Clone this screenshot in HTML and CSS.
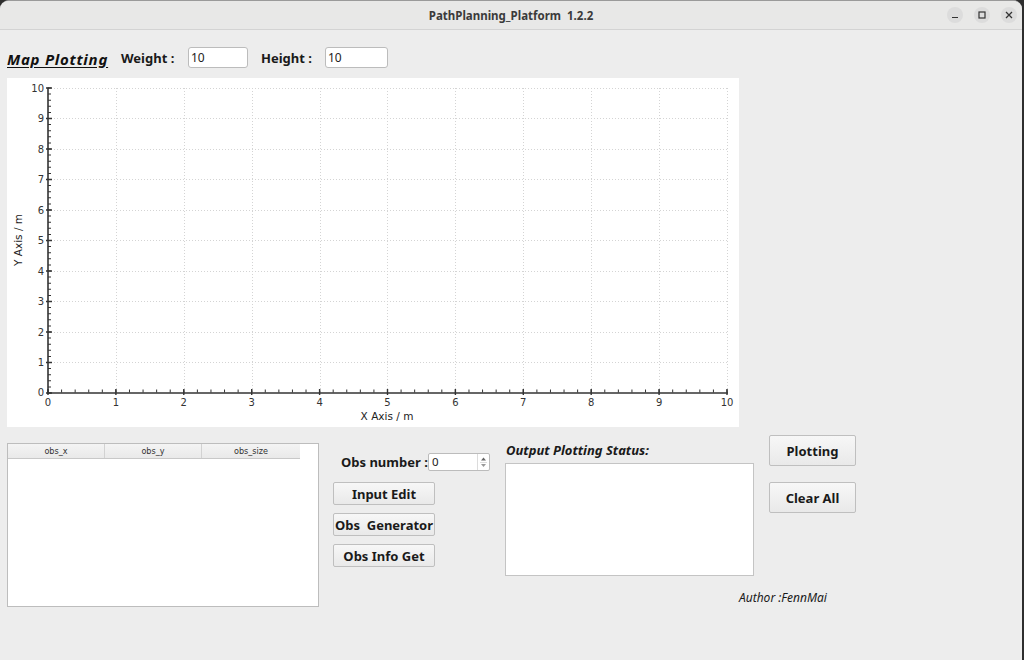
FILE: index.html
```html
<!DOCTYPE html>
<html lang="en">
<head>
<meta charset="utf-8">
<title>PathPlanning_Platform 1.2.2</title>
<link rel="stylesheet" href="styles.css">
</head>
<body>
<div class="window">
  <header class="titlebar">
    <div class="title">PathPlanning_Platform&nbsp;&nbsp;1.2.2</div>
    <div class="controls">
      <span class="wbtn"><svg width="16" height="16" viewBox="0 0 16 16"><line x1="5" y1="10.5" x2="11" y2="10.5" stroke="#333" stroke-width="1.2"/></svg></span>
      <span class="wbtn"><svg width="16" height="16" viewBox="0 0 16 16"><rect x="5" y="5" width="6" height="6" fill="none" stroke="#333" stroke-width="1.2"/></svg></span>
      <span class="wbtn"><svg width="16" height="16" viewBox="0 0 16 16"><path d="M5 5 L11 11 M11 5 L5 11" stroke="#333" stroke-width="1.3"/></svg></span>
    </div>
  </header>
  <main class="content">
    <div class="toprow">
      <span class="map-title">Map Plotting</span>
      <span class="lbl lbl-w">Weight :</span>
      <div class="field field-w">10</div>
      <span class="lbl lbl-h">Height :</span>
      <div class="field field-h">10</div>
    </div>
    <div class="chart">
      <svg width="732" height="349" viewBox="0 0 732 349" class="plot">
        <g stroke="#d4d4d4" stroke-width="1" stroke-dasharray="1 2">
          <line x1="109.5" y1="10" x2="109.5" y2="315"/>
          <line x1="177.5" y1="10" x2="177.5" y2="315"/>
          <line x1="245.5" y1="10" x2="245.5" y2="315"/>
          <line x1="313.5" y1="10" x2="313.5" y2="315"/>
          <line x1="380.5" y1="10" x2="380.5" y2="315"/>
          <line x1="448.5" y1="10" x2="448.5" y2="315"/>
          <line x1="516.5" y1="10" x2="516.5" y2="315"/>
          <line x1="584.5" y1="10" x2="584.5" y2="315"/>
          <line x1="652.5" y1="10" x2="652.5" y2="315"/>
          <line x1="720.5" y1="10" x2="720.5" y2="315"/>
          <line x1="41" y1="284.5" x2="720" y2="284.5"/>
          <line x1="41" y1="254.5" x2="720" y2="254.5"/>
          <line x1="41" y1="223.5" x2="720" y2="223.5"/>
          <line x1="41" y1="193.5" x2="720" y2="193.5"/>
          <line x1="41" y1="162.5" x2="720" y2="162.5"/>
          <line x1="41" y1="132.5" x2="720" y2="132.5"/>
          <line x1="41" y1="101.5" x2="720" y2="101.5"/>
          <line x1="41" y1="71.5" x2="720" y2="71.5"/>
          <line x1="41" y1="40.5" x2="720" y2="40.5"/>
          <line x1="41" y1="10.5" x2="720" y2="10.5"/>
        </g>
        <g stroke="#333">
          <line x1="41" y1="9.5" x2="41" y2="316" stroke-width="1.6"/>
          <line x1="40" y1="315" x2="721" y2="315" stroke-width="1.6"/>
          <line x1="40.5" y1="313" x2="721" y2="313" stroke-width="3" stroke-dasharray="1 12.58"/>
          <line x1="42.5" y1="315.5" x2="42.5" y2="9.5" stroke-width="3" stroke-dasharray="1 5.1"/>
          <line x1="40.3" y1="314" x2="722" y2="314" stroke-width="6" stroke-dasharray="1.4 66.5"/>
          <line x1="42" y1="315.7" x2="42" y2="8" stroke-width="6" stroke-dasharray="1.4 29.1"/>
        </g>
        <g class="ticklbl" text-anchor="end">
          <text x="37" y="318">0</text>
          <text x="37" y="288">1</text>
          <text x="37" y="257.5">2</text>
          <text x="37" y="227">3</text>
          <text x="37" y="196.5">4</text>
          <text x="37" y="166">5</text>
          <text x="37" y="135.5">6</text>
          <text x="37" y="105">7</text>
          <text x="37" y="74.5">8</text>
          <text x="37" y="44">9</text>
          <text x="37" y="13.5">10</text>
        </g>
        <g class="ticklbl" text-anchor="middle">
          <text x="41" y="328">0</text>
          <text x="108.9" y="328">1</text>
          <text x="176.8" y="328">2</text>
          <text x="244.7" y="328">3</text>
          <text x="312.6" y="328">4</text>
          <text x="380.5" y="328">5</text>
          <text x="448.4" y="328">6</text>
          <text x="516.3" y="328">7</text>
          <text x="584.2" y="328">8</text>
          <text x="652.1" y="328">9</text>
          <text x="720" y="328">10</text>
        </g>
        <text class="axlbl" x="380" y="342" text-anchor="middle">X Axis / m</text>
        <text class="axlbl" x="15" y="162" text-anchor="middle" transform="rotate(-90 15 162)">Y Axis / m</text>
      </svg>
    </div>
    <div class="bottom">
      <div class="table">
        <div class="thead">
          <div class="th th1">obs_x</div>
          <div class="th th2">obs_y</div>
          <div class="th th3">obs_size</div>
        </div>
      </div>
      <div class="mid">
        <div class="obsrow">
          <span class="lbl lbl-obs">Obs number :</span>
          <div class="spin">
            <div class="spin-val">0</div>
            <div class="spin-arrows">
              <svg width="11" height="16" viewBox="0 0 11 16"><path d="M3 6.5 L5.5 3.5 L8 6.5 Z" fill="#666"/><path d="M3 10 L5.5 13 L8 10 Z" fill="#999"/><line x1="2" y1="8.5" x2="9" y2="8.5" stroke="#ddd"/></svg>
            </div>
          </div>
        </div>
        <div class="btnstack">
          <button class="btn btn-sm">Input Edit</button>
          <button class="btn btn-sm">Obs&nbsp; Generator</button>
          <button class="btn btn-sm">Obs Info Get</button>
        </div>
      </div>
      <div class="rightgroup">
        <div class="statusrow">
          <div class="status">
            <div class="status-lbl">Output Plotting Status:</div>
            <div class="status-box"></div>
          </div>
          <div class="btncol">
            <button class="btn btn-lg">Plotting</button>
            <button class="btn btn-lg">Clear All</button>
          </div>
        </div>
        <div class="author">Author :FennMai</div>
      </div>
    </div>
  </main>
</div>
</body>
</html>
```

FILE: styles.css
```css
* { box-sizing: border-box; }

body {
  margin: 0;
  background: #2e2e2e;
  font-family: "Noto Sans", "Open Sans", sans-serif;
  color: #1e1e1e;
}

.window {
  width: 1022px;
  height: 660px;
  background: #ededed;
  border-radius: 9px 9px 0 0;
  overflow: hidden;
  border-top: 1px solid #9a9a9a;
}

.titlebar {
  height: 29px;
  background: #e8e8e7;
  border-bottom: 1px solid #d3d3d3;
  display: grid;
  grid-template-columns: 1fr auto 1fr;
  align-items: center;
}

.title {
  grid-column: 2;
  font-weight: 700;
  font-size: 11.5px;
  color: #3a3a3a;
}

.controls {
  grid-column: 3;
  justify-self: end;
  display: flex;
  gap: 11px;
  padding-right: 5px;
}

.wbtn {
  width: 16px;
  height: 16px;
  border-radius: 50%;
  background: #dcdcdc;
  display: flex;
}

.content {
  padding: 17px 0 0 7px;
}

.toprow {
  display: flex;
  align-items: center;
  height: 21px;
}

.map-title {
  width: 114px;
  font-weight: 700;
  font-style: italic;
  font-size: 15px;
  letter-spacing: 0.75px;
  text-decoration: underline;
  text-underline-offset: 2px;
  color: #111;
  padding-top: 2px;
}

.lbl {
  font-weight: 700;
  font-size: 13px;
  color: #1a1a1a;
}

.lbl-w { width: 67px; }
.lbl-h { width: 64px; }

.field {
  height: 21px;
  background: #fff;
  border: 1px solid #bcbcbc;
  border-radius: 3px;
  font-size: 12px;
  line-height: 19px;
  padding-left: 2px;
  color: #222;
}

.field-w { width: 60px; margin-right: 13px; }
.field-h { width: 63px; }

.chart {
  margin-top: 10px;
  width: 732px;
  height: 349px;
  background: #fff;
}

.plot { display: block; }

.ticklbl text {
  font-family: "DejaVu Sans", sans-serif;
  font-size: 10px;
  fill: #333;
}

.axlbl {
  font-family: "DejaVu Sans", sans-serif;
  font-size: 10.5px;
  fill: #222;
}

.bottom {
  display: flex;
  align-items: flex-start;
  margin-top: 8px;
}

.table {
  margin-top: 8px;
  width: 312px;
  height: 164px;
  background: #fff;
  border: 1px solid #bdbdbd;
}

.thead {
  display: flex;
  width: 292px;
  height: 15px;
  background: linear-gradient(#f4f4f4, #e9e9e9);
  border-bottom: 1px solid #c8c8c8;
}

.th {
  font-family: "Liberation Sans Narrow", "DejaVu Sans Condensed", "Liberation Sans", sans-serif;
  font-size: 9px;
  line-height: 14px;
  text-align: center;
  color: #333;
  border-right: 1px solid #d2d2d2;
}

.th1 { width: 97px; }
.th2 { width: 97px; }
.th3 { width: 98px; border-right: none; }

.mid {
  margin-left: 14px;
  margin-top: 18px;
  width: 157px;
}

.obsrow {
  display: flex;
  align-items: center;
  height: 18px;
  padding-left: 8px;
}

.lbl-obs { width: 87px; }

.spin {
  display: flex;
  width: 62px;
  height: 18px;
  background: #fff;
  border: 1px solid #bcbcbc;
  border-radius: 2px;
}

.spin-val {
  flex: 1;
  font-size: 11.5px;
  line-height: 16px;
  padding-left: 3px;
  color: #222;
}

.spin-arrows {
  width: 12px;
  border-left: 1px solid #dcdcdc;
  display: flex;
  align-items: center;
}

.btnstack {
  margin-top: 11px;
  display: flex;
  flex-direction: column;
  gap: 8px;
}

.btn {
  font-family: "Noto Sans", "Open Sans", sans-serif;
  font-weight: 700;
  font-size: 13px;
  color: #1a1a1a;
  background: linear-gradient(#f7f7f7, #e9e9e9);
  border: 1px solid #bfbfbf;
  border-radius: 2px;
  padding: 0;
  white-space: nowrap;
}

.btn-sm { width: 102px; height: 23px; }
.btn-lg { width: 87px; height: 31px; }

.rightgroup {
  margin-left: 15px;
}

.statusrow {
  display: flex;
  align-items: flex-start;
}

.status {
  margin-top: 8px;
  width: 249px;
}

.status-lbl {
  font-weight: 700;
  font-style: italic;
  font-size: 13px;
  line-height: 15px;
  color: #1a1a1a;
  padding-left: 1px;
}

.status-box {
  margin-top: 5px;
  height: 113px;
  background: #fff;
  border: 1px solid #c4c4c4;
}

.btncol {
  margin-left: 15px;
  display: flex;
  flex-direction: column;
  gap: 16px;
}

.author {
  padding-left: 234px;
  margin-top: 14px;
  font-style: italic;
  font-size: 12px;
  line-height: 16px;
  color: #1a1a1a;
}
```
